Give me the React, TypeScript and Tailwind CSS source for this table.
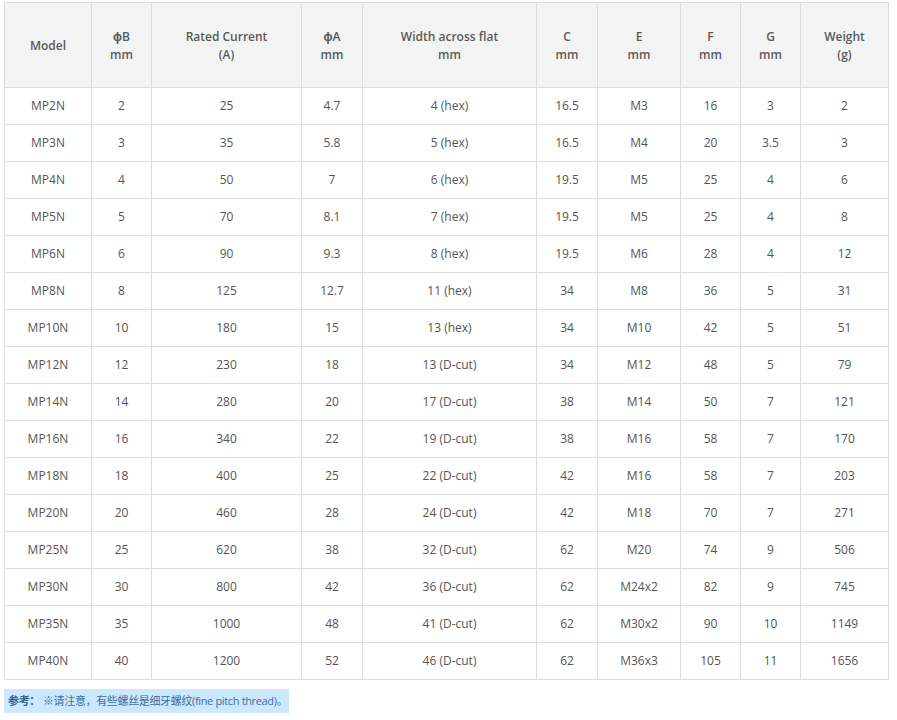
const headers = [
  ["Model"],
  ["ϕB", "mm"],
  ["Rated Current", "(A)"],
  ["ϕA", "mm"],
  ["Width across flat", "mm"],
  ["C", "mm"],
  ["E", "mm"],
  ["F", "mm"],
  ["G", "mm"],
  ["Weight", "(g)"],
];

const widths = [87, 60, 150, 61, 174, 61, 83, 60, 60, 88];

const rows = [
  ["MP2N", "2", "25", "4.7", "4 (hex)", "16.5", "M3", "16", "3", "2"],
  ["MP3N", "3", "35", "5.8", "5 (hex)", "16.5", "M4", "20", "3.5", "3"],
  ["MP4N", "4", "50", "7", "6 (hex)", "19.5", "M5", "25", "4", "6"],
  ["MP5N", "5", "70", "8.1", "7 (hex)", "19.5", "M5", "25", "4", "8"],
  ["MP6N", "6", "90", "9.3", "8 (hex)", "19.5", "M6", "28", "4", "12"],
  ["MP8N", "8", "125", "12.7", "11 (hex)", "34", "M8", "36", "5", "31"],
  ["MP10N", "10", "180", "15", "13 (hex)", "34", "M10", "42", "5", "51"],
  ["MP12N", "12", "230", "18", "13 (D-cut)", "34", "M12", "48", "5", "79"],
  ["MP14N", "14", "280", "20", "17 (D-cut)", "38", "M14", "50", "7", "121"],
  ["MP16N", "16", "340", "22", "19 (D-cut)", "38", "M16", "58", "7", "170"],
  ["MP18N", "18", "400", "25", "22 (D-cut)", "42", "M16", "58", "7", "203"],
  ["MP20N", "20", "460", "28", "24 (D-cut)", "42", "M18", "70", "7", "271"],
  ["MP25N", "25", "620", "38", "32 (D-cut)", "62", "M20", "74", "9", "506"],
  ["MP30N", "30", "800", "42", "36 (D-cut)", "62", "M24x2", "82", "9", "745"],
  ["MP35N", "35", "1000", "48", "41 (D-cut)", "62", "M30x2", "90", "10", "1149"],
  ["MP40N", "40", "1200", "52", "46 (D-cut)", "62", "M36x3", "105", "11", "1656"],
];

export default function App() {
  return (
    <div className="bg-white px-1 pt-[2px] text-[12px] text-[#555] font-['Open_Sans','Noto_Sans_CJK_SC',sans-serif]">
      <table className="table-fixed border-collapse w-[885px]">
        <colgroup>
          {widths.map((w, i) => (
            <col key={i} style={{ width: w }} />
          ))}
        </colgroup>
        <thead>
          <tr className="h-[85px] bg-[#f2f3f3]">
            {headers.map((h, i) => (
              <th
                key={i}
                className="border border-[#dddddd] text-center font-semibold text-[#5a5a5a] leading-[18px] px-1 pt-[1px]"
              >
                {h.map((line, j) => (
                  <div key={j}>{line}</div>
                ))}
              </th>
            ))}
          </tr>
        </thead>
        <tbody>
          {rows.map((r, i) => (
            <tr key={i} className="h-[37px]">
              {r.map((c, j) => (
                <td key={j} className="border border-[#dddddd] text-center leading-[18px] p-0">
                  {c}
                </td>
              ))}
            </tr>
          ))}
        </tbody>
      </table>
      <div className="mt-[9px] inline-flex items-center h-[24px] whitespace-nowrap bg-[#cce8ff] pl-[4px] pr-[2px] text-[11px] text-[#3c6ea0] tracking-[-0.35px]">
        <span className="font-bold text-[#35648f]">参考：</span>
        <span className="ml-[3px]">※请注意，有些螺丝是细牙螺纹(fine pitch thread)。</span>
      </div>
    </div>
  );
}
